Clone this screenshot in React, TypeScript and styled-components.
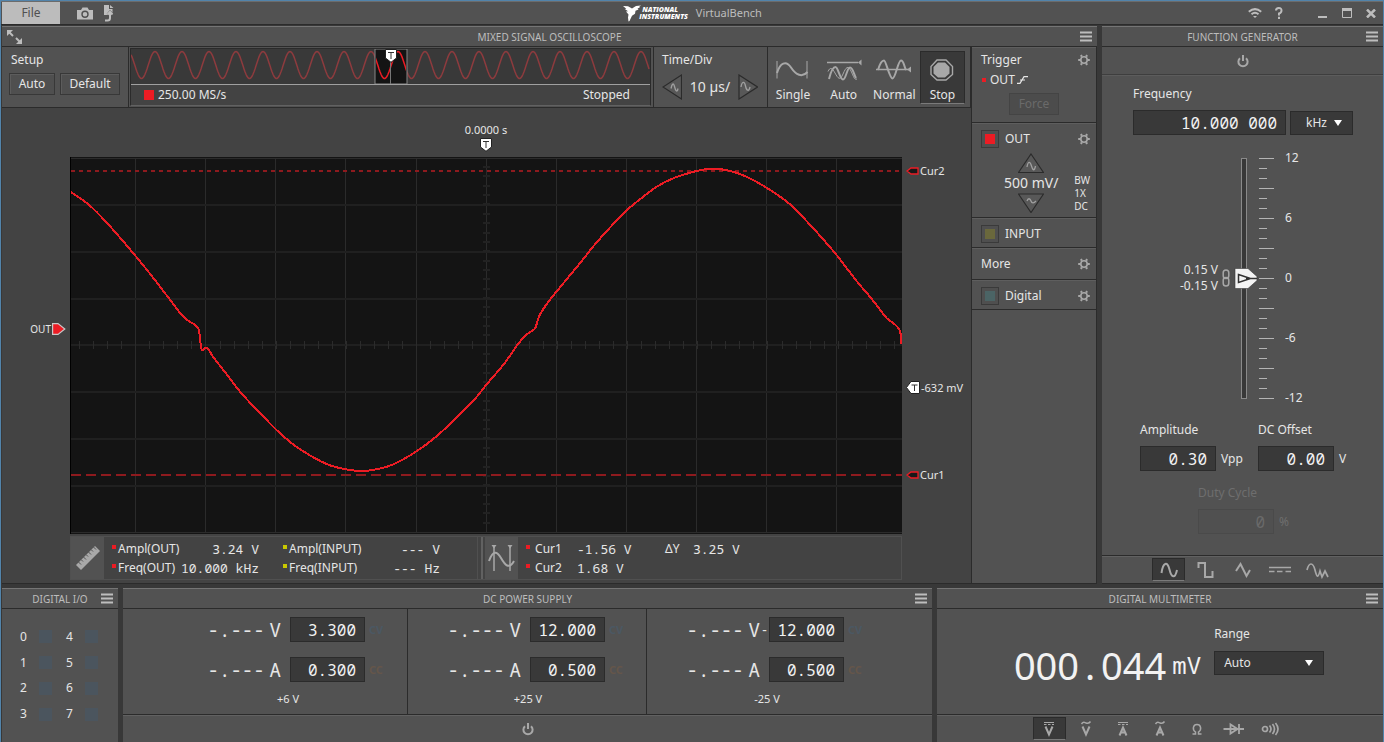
import React from 'react';
import styled, { createGlobalStyle, css } from 'styled-components';

const sans = '"Noto Sans", "Open Sans", sans-serif';
const digits = css`
  font-family: "Noto Sans Mono", "DejaVu Sans Mono", monospace;
  white-space: pre;
`;

const c = {
  frame: '#5284ab',
  gap: '#383838',
  panel: '#525252',
  well: '#434343',
  dark: '#393939',
  line: '#2b2b2b',
  light: '#616161',
  text: '#e6e6e6',
  muted: '#bdbdbd',
  icon: '#a8a8a8',
  red: '#ec1c24',
  yellow: '#c8c800',
};

const GlobalStyle = createGlobalStyle`
  *, *::before, *::after { box-sizing: border-box; }
  body { margin: 0; background: ${c.gap}; }
  button, input, select { font: inherit; color: inherit; margin: 0; padding: 0; border: 0; background: none; border-radius: 0; }
  svg { display: block; flex: none; }
`;

const Window = styled.div`
  display: flex;
  flex-direction: column;
  min-height: 100vh;
  border: 1px solid ${c.frame};
  border-bottom: 0;
  background: ${c.gap};
  color: ${c.text};
  font: 12px/16px ${sans};
`;

const TitleBar = styled.header`
  display: grid;
  grid-template-columns: 1fr auto 1fr;
  align-items: center;
  height: 24px;
  padding-left: 1px;
  background: ${c.panel};
  border-top: 1px solid #6c6c6c;
  border-bottom: 1px solid ${c.line};
`;

const BarGroup = styled.div<{ $end?: boolean }>`
  display: flex;
  align-items: center;
  height: 100%;
  justify-content: ${p => (p.$end ? 'flex-end' : 'flex-start')};
`;

const WindowControls = styled.div`
  display: flex;
  margin-left: 20px;
`;

const FileButton = styled.button`
  width: 58px;
  height: 100%;
  margin-right: 17px;
  background: #bcbcbc;
  color: #505050;
`;

const IconButton = styled.button<{ $w: number }>`
  display: flex;
  align-items: center;
  justify-content: center;
  width: ${p => p.$w}px;
  height: 20px;
  color: ${c.muted};
`;

const Brand = styled.div`
  display: flex;
  align-items: center;
  gap: 8px;
  color: ${c.muted};
  font-size: 11px;
`;

const Logo = styled.div`
  display: flex;
  align-items: center;
  color: #fff;
`;

const LogoWords = styled.div`
  margin-left: -2px;
  font: italic 800 7px/7px "Open Sans", sans-serif;
  span { display: block; }
  span:first-child { padding-left: 3px; }
`;

const TopRow = styled.div`
  flex: 1;
  display: grid;
  grid-template-columns: minmax(0, 1fr) 281px;
  gap: 5px;
  margin-top: 1px;
  padding-left: 1px;
`;

const BottomRow = styled.div`
  display: grid;
  grid-template-columns: 116px minmax(0, 1fr) 446px;
  gap: 5px;
  height: 155px;
  margin-top: 4px;
  padding-left: 1px;
`;

const Panel = styled.section`
  display: flex;
  flex-direction: column;
  background: ${c.panel};
  border-bottom: 1px solid ${c.line};
`;

const PanelHeader = styled.header`
  display: grid;
  grid-template-columns: 1fr auto 1fr;
  align-items: center;
  height: 21px;
  padding: 0 5px;
  border-top: 1px solid #757575;
  border-bottom: 1px solid ${c.line};
  color: ${c.muted};
`;

const PanelTitle = styled.h2`
  grid-column: 2;
  margin: 0;
  font-size: 10px;
  font-weight: 400;
`;

const MenuButton = styled.button`
  grid-column: 3;
  justify-self: end;
  color: ${c.muted};
`;

const PowerButton = styled.button`
  display: flex;
  align-items: center;
  justify-content: center;
  height: 27px;
  color: ${c.icon};
`;

const Footer = styled.div`
  display: flex;
  justify-content: center;
  align-items: center;
  gap: 4px;
  height: 28px;
  border-top: 1px solid ${c.line};
  box-shadow: inset 0 1px ${c.light};
`;

const ModeButton = styled.button<{ $on?: boolean }>`
  display: flex;
  align-items: center;
  justify-content: center;
  width: 33px;
  height: 23px;
  color: ${c.icon};
  background: ${p => (p.$on ? c.dark : 'none')};
  border: 1px solid ${p => (p.$on ? c.line : 'transparent')};
  border-bottom-color: ${p => (p.$on ? '#7a7a7a' : 'transparent')};
`;

/* oscilloscope */

const ScopeBody = styled.div`
  flex: 1;
  display: grid;
  grid-template-columns: minmax(0, 1fr) 126px;
`;

const ScopeMain = styled.div`
  display: flex;
  flex-direction: column;
  background: ${c.well};
`;

const Toolbar = styled.div`
  display: flex;
  height: 61px;
  background: ${c.panel};
  border-bottom: 1px solid ${c.line};
`;

const SetupGroup = styled.div`
  width: 127px;
  padding: 5px 8px 0 7px;
  border-right: 1px solid ${c.line};
`;

const GroupLabel = styled.div`
  padding-left: 2px;
  margin-bottom: 5px;
`;

const TimeLabel = styled.div`
  margin-bottom: 6px;
`;

const ButtonRow = styled.div`
  display: flex;
  gap: 5px;
`;

const PushButton = styled.button<{ $w: number }>`
  width: ${p => p.$w}px;
  height: 22px;
  border: 1px solid #383838;
  box-shadow: inset 1px 1px #5c5c5c;
  background: #4f4f4f;
  &:disabled { color: #6a6a6a; background: #4c4c4c; border-color: #444; box-shadow: none; }
`;

const Overview = styled.div`
  flex: 1;
  margin: 1px 2px 1px 1px;
  display: flex;
  flex-direction: column;
  border: 1px solid ${c.line};
  border-bottom-color: ${c.light};
  background: ${c.well};
`;

const OverviewWave = styled.div`
  position: relative;
  height: 36px;
  background: ${c.dark};
  border-bottom: 1px solid #a0a0a0;
  > svg { width: 100%; height: 100%; }
`;

const OverviewPin = styled.div`
  position: absolute;
  left: 50%;
  top: 0;
  margin-left: -6px;
`;

const OverviewStatus = styled.div`
  display: flex;
  align-items: center;
  gap: 4px;
  padding: 2px 20px 0 13px;
  span:last-child { margin-left: auto; }
`;

const Swatch = styled.i<{ $size: number; $color: string }>`
  flex: none;
  display: inline-block;
  width: ${p => p.$size}px;
  height: ${p => p.$size}px;
  background: ${p => p.$color};
`;

const TimeGroup = styled.div`
  width: 114px;
  padding: 5px 9px 0 8px;
  border-left: 1px solid ${c.line};
`;

const Stepper = styled.div`
  display: flex;
  align-items: center;
  justify-content: space-between;
  font-size: 14px;
`;

const RunGroup = styled.div`
  display: flex;
  justify-content: space-between;
  width: 204px;
  padding: 4px 5px 3px 0;
  border-left: 1px solid ${c.line};
  border-right: 1px solid ${c.line};
`;

const RunButton = styled.button<{ $on?: boolean }>`
  width: ${p => (p.$on ? 45 : 50)}px;
  display: flex;
  flex-direction: column;
  align-items: center;
  justify-content: space-between;
  padding: 7px 0 0;
  background: ${p => (p.$on ? c.dark : 'none')};
  border: 1px solid ${p => (p.$on ? c.line : 'transparent')};
  border-bottom-color: ${p => (p.$on ? '#7a7a7a' : 'transparent')};
`;

const PlotArea = styled.div`
  flex: 1;
  display: grid;
  grid-template-columns: 68px minmax(0, 1fr) 69px;
  grid-template-rows: 49px minmax(377px, 1fr) 49px;
`;

const TimeMarker = styled.div`
  grid-column: 2;
  grid-row: 1;
  display: flex;
  flex-direction: column;
  align-items: center;
  justify-content: flex-end;
  padding-bottom: 5px;
  font-size: 11px;
`;

const Plot = styled.div`
  grid-column: 2;
  grid-row: 2;
  background: #141414;
  border-left: 1px solid #000;
  > svg { width: 100%; height: 100%; }
`;

const Gutter = styled.div<{ $col: number }>`
  grid-column: ${p => p.$col};
  grid-row: 2;
  position: relative;
  font-size: ${p => (p.$col === 1 ? 10 : 11)}px;
`;

const Pin = styled.div<{ $right?: boolean }>`
  position: absolute;
  display: flex;
  align-items: center;
  gap: 1px;
  height: 16px;
  margin-top: -8px;
  white-space: nowrap;
  ${p => (p.$right ? 'left: 4px;' : 'right: 4px;')}
`;

const MeasureBar = styled.div`
  grid-column: 2;
  grid-row: 3;
  align-self: start;
  display: flex;
  height: 44px;
  margin-top: 2px;
  border: 1px solid #505050;
`;

const MeasureButton = styled.button`
  display: flex;
  align-items: center;
  justify-content: center;
  width: 33px;
  background: ${c.panel};
  color: ${c.icon};
`;

const MeasureSplit = styled.div`
  width: 6px;
  border-left: 1px solid #505050;
  border-right: 2px solid ${c.light};
  margin: 0 2px 0 37px;
`;

const MeasureTable = styled.table<{ $w: number }>`
  flex: none;
  width: ${p => p.$w}px;
  table-layout: fixed;
  border-collapse: collapse;
  margin: 2px 0 2px 8px;
  th, td { padding: 0; height: 19px; font-size: 12px; font-weight: 400; text-align: left; white-space: pre; }
  th i { margin-right: 2px; vertical-align: 4px; }
`;

const Num = styled.td<{ $left?: boolean; $pad?: number }>`
  && {
    ${digits}
    font-size: 13px;
    text-align: ${p => (p.$left ? 'left' : 'right')};
    padding-right: ${p => p.$pad ?? 0}px;
  }
`;

/* channel column */

const Side = styled.aside`
  border-left: 1px solid ${c.line};
  border-right: 1px solid ${c.line};
`;

const SideSection = styled.div<{ $h: number }>`
  height: ${p => p.$h}px;
  padding: 1px 6px 0 9px;
  border-bottom: 1px solid ${c.line};
  box-shadow: inset 0 1px #5e5e5e;
`;

const SideRow = styled.div<{ $h: number }>`
  display: flex;
  align-items: center;
  gap: 5px;
  height: ${p => p.$h}px;
  > button:last-child { margin-left: auto; color: ${c.icon}; }
`;

const TriggerSource = styled.div`
  display: flex;
  align-items: center;
  gap: 2px;
  height: 16px;
  margin-bottom: 5px;
  padding-left: 1px;
  i { margin-right: 2px; }
`;

const ForceRow = styled.div`
  display: flex;
  padding-left: 28px;
`;

const CheckLabel = styled.label`
  display: flex;
  align-items: center;
  gap: 6px;
`;

const ColorCheck = styled.input<{ $color: string }>`
  appearance: none;
  width: 18px;
  height: 18px;
  border: 1px solid #3a3a3a;
  background: linear-gradient(${p => p.$color}, ${p => p.$color}) center / 10px 10px no-repeat #4f4f4f;
`;

const ScaleRow = styled.div`
  display: flex;
  justify-content: space-between;
  padding-left: 23px;
`;

const ScaleStepper = styled.div`
  display: flex;
  flex-direction: column;
  align-items: center;
  font-size: 14px;
  line-height: 20px;
`;

const Coupling = styled.div`
  padding-top: 21px;
  font-size: 10px;
  line-height: 13px;
  span { display: block; }
`;

/* function generator */

const PowerStrip = styled.div`
  display: flex;
  justify-content: center;
  border-bottom: 1px solid #3e3e3e;
  box-shadow: 0 1px #5c5c5c;
`;

const GenBody = styled.div`
  flex: 1;
  width: 281px;
  margin: 0 auto;
  padding: 11px 30px 0 31px;
`;

const Field = styled.label`
  display: block;
`;

const FieldCaption = styled.span`
  display: block;
  margin-bottom: 8px;
`;

const FieldRow = styled.div`
  display: flex;
  align-items: flex-end;
  gap: 4px;
`;

const NumberBox = styled.input<{ $w: number }>`
  && {
    ${digits}
    width: ${p => p.$w}px;
    height: 25px;
    padding: 1px 8px 0 0;
    font-size: 16px;
    text-align: right;
    background: ${c.dark};
    border: 1px solid ${c.line};
    color: #f2f2f2;
  }
  &&:disabled { color: #6a6a6a; background: #505050; border-color: #4a4a4a; }
`;

const SelectWrap = styled.span<{ $w: number; $pad: number }>`
  position: relative;
  display: block;
  width: ${p => p.$w}px;
  select {
    appearance: none;
    width: 100%;
    height: 24px;
    padding-left: ${p => p.$pad}px;
    background: ${c.dark};
    border: 1px solid ${c.line};
  }
  svg { position: absolute; right: 11px; top: 9px; pointer-events: none; }
`;

const SliderRow = styled.div`
  display: flex;
  margin: 15px 0 16px 43px;
`;

const SliderValues = styled.div`
  width: 42px;
  padding-top: 112px;
  text-align: right;
`;

const LinkMark = styled.div`
  padding: 119px 3px 0 4px;
  color: ${c.icon};
`;

const SliderTrack = styled.div`
  position: relative;
  width: 52px;
  input {
    position: absolute;
    inset: 0;
    width: 24px;
    height: 100%;
    opacity: 0;
    writing-mode: vertical-lr;
    direction: rtl;
  }
`;

const SliderScale = styled.div`
  display: flex;
  flex-direction: column;
  justify-content: space-between;
  height: 256px;
`;

const LevelRow = styled.div`
  display: grid;
  grid-template-columns: 118px auto;
  justify-content: start;
  padding-left: 7px;
  margin-bottom: 14px;
`;

const WithUnit = styled.span`
  display: flex;
  align-items: center;
  gap: 5px;
`;

const DutyField = styled(Field)`
  padding-left: 65px;
  color: #6e6e6e;
`;

/* digital i/o */

const IoGrid = styled.div`
  flex: 1;
  display: grid;
  grid-template-columns: 46px 46px;
  grid-template-rows: repeat(4, 1fr);
  grid-auto-flow: column;
  padding: 15px 0 15px 17px;
`;

const IoLine = styled.label`
  display: flex;
  align-items: center;
  gap: 12px;
  padding-left: 1px;
`;

const IoCheck = styled.input`
  appearance: none;
  width: 13px;
  height: 13px;
  background: #4b555e;
`;

/* power supply */

const SupplyBody = styled.div`
  flex: 1;
  display: grid;
  grid-template-columns: minmax(239px, 1fr) 239px minmax(239px, 1fr);
`;

const Channel = styled.div<{ $align: string }>`
  display: flex;
  justify-content: ${p => p.$align};
  border-right: 1px solid ${c.line};
  &:last-child { border-right: 0; }
`;

const ChannelInner = styled.div`
  width: 239px;
  padding: 8px 0 0 29px;
`;

const SupplyRow = styled.label`
  display: flex;
  align-items: center;
  height: 25px;
  margin-bottom: 15px;
`;

const SupplyReading = styled.span`
  ${digits}
  display: flex;
  justify-content: flex-end;
  gap: 5px;
  width: 84px;
  font-size: 19px;
`;

const Sign = styled.span`
  width: 9px;
  text-align: center;
  font-size: 14px;
`;

const LimitTag = styled.span<{ $color: string }>`
  margin-left: 4px;
  font-size: 11px;
  font-weight: 700;
  color: ${p => p.$color};
`;

const ChannelName = styled.div`
  width: 182px;
  font-size: 11px;
  text-align: center;
  margin-top: -6px;
`;

/* multimeter */

const MeterBody = styled.div`
  flex: 1;
  display: flex;
  justify-content: center;
  gap: 13px;
  padding: 17px 0 0 18px;
`;

const MeterReading = styled.div`
  display: flex;
  align-items: center;
  gap: 6px;
  height: 78px;
  color: #f2f2f2;
  font-size: 38px;
`;

const DecimalPoint = styled.span`
  display: inline-block;
  width: 22px;
  text-align: center;
`;

const MeterUnit = styled.small`
  ${digits}
  font-size: 24px;
`;

const RangeCaption = styled.span`
  display: block;
  margin-bottom: 9px;
`;

/* drawings */

const stroke = { fill: 'none', stroke: 'currentColor', strokeWidth: 2 };

const MenuIcon = () => (
  <svg width="12" height="11" viewBox="0 0 12 11"><path {...stroke} d="M0 1.500h12M0 5.500h12M0 9.500h12" /></svg>
);
const GearIcon = () => (
  <svg width="12" height="12" viewBox="0 0 12 12">
    <circle cx="6" cy="6" r="3.200" fill="none" stroke="currentColor" strokeWidth="1.600" />
    <path stroke="currentColor" strokeWidth="2" d="M3.800 2.700L3 1M8.200 2.700L9 1M3.800 9.300L3 11M8.200 9.300L9 11M2.500 6H.2M9.500 6h2.300" />
  </svg>
);
const PowerIcon = () => (
  <svg width="12" height="14" viewBox="0 0 12 14">
    <path {...stroke} d="M3 4.200A4.600 4.600 0 1 0 9 4.200M6 1v6" />
  </svg>
);
const TPin = () => (
  <svg width="12" height="14" viewBox="0 0 12 14">
    <path d="M.5.5h11v8.500L6 13.300.5 9z" fill="#fff" stroke="#222" />
    <path d="M3 3.500h6M6 3.500v6.500" stroke="#333" fill="none" />
  </svg>
);
const TPinLeft = () => (
  <svg width="14" height="13" viewBox="0 0 14 13">
    <path d="M13.500.5v12H5L.5 6.500 5 .5z" fill="#fff" stroke="#222" />
    <path d="M5.500 4h6M8.500 4v6" stroke="#333" fill="none" />
  </svg>
);
const CursorPin = () => (
  <svg width="13" height="8" viewBox="0 0 13 8"><path d="M12 1v6H5L1 4l4-3z" fill="#181818" stroke={c.red} strokeWidth="1.300" /></svg>
);
const OutPin = () => (
  <svg width="14" height="12" viewBox="0 0 14 12"><path d="M.6.6H6L12.800 6 6 11.400H.6z" fill={c.red} stroke="#c8c8c8" strokeWidth="1.200" /></svg>
);

const StepIcon = ({ dir }: { dir: 'left' | 'right' | 'up' | 'down' }) => {
  const side = dir === 'left' || dir === 'right';
  const tri = {
    left: 'M19.500 1v24L1 13z',
    right: 'M1 1v24l18.500-12z',
    up: 'M13 1l12.500 18.500H.5z',
    down: 'M.5 1h25L13 19.500z',
  }[dir];
  const wave = {
    left: 'M9 14.500c1-5 2.500-6 3.500-2s2.500 7 3.500 2',
    right: 'M3 13c1-6 3.500-6 4.500-1s3.500 6 4.500 1',
    up: 'M9 14c1-6 3-6 4.500-1s3 5 4 0',
    down: 'M9 8c1-3 3-3 4 0s3 2 5 0',
  }[dir];
  return (
    <svg width={side ? 20 : 26} height={side ? 26 : 20} viewBox={side ? '0 0 20 26' : '0 0 26 20'}>
      <path d={tri} fill="#585858" stroke="#2b2b2b" strokeWidth="1.200" />
      <path d={wave} fill="none" stroke="#a0a0a0" strokeWidth="1.300" />
    </svg>
  );
};

const runIcons = {
  Single: (
    <g fill="none" stroke="currentColor">
      <path d="M2 2v17.500M32 2v17.500" />
      <path strokeWidth="2" d="M2 14C5 4 11 1 16 8.500S27 19 32.500 13" />
    </g>
  ),
  Auto: (
    <g fill="none" stroke="currentColor">
      <path d="M1 3.500h31" strokeWidth="1.500" />
      <path d="M32 3.500l3.500-3v6z" fill="currentColor" stroke="none" />
      <path strokeWidth="2" d="M3 20C5 12 7 8 9.500 8S14 20.500 17 20.500 21 8.500 24 8.500 28 16 30 19" />
      <path d="M2 12.500C4 8 6 8.500 9 14s5 8 8 1 5-9 8-3 3 9 6 8" />
    </g>
  ),
  Normal: (
    <g fill="none" stroke="currentColor">
      <path d="M0 10.500h32" strokeWidth="1.500" />
      <path d="M31 10.500l4-3v6z" fill="currentColor" stroke="none" />
      <path strokeWidth="2" d="M2 11C4 4 6 1.500 8 1.500S13.500 19.500 16.500 19.500 22 1.500 25 1.500 28 8 30 11" />
    </g>
  ),
  Stop: (
    <g>
      <path d="M13 1h9l6.500 6.500v8L22 21h-9l-6-5.500v-8z" fill="none" stroke="#a8a8a8" strokeWidth="1.400" />
      <path d="M14 3.500h7l4.500 4.500v6.500L21 18.500h-7L9.500 14.500V8z" fill="#a8a8a8" />
    </g>
  ),
};

const genIcons = [
  ['Sine', <path {...stroke} d="M4.500 12C6 1 10.500 0 12.500 8.500S18 18 20 9" />],
  ['Square', <path {...stroke} d="M4.500 7V2h6.500v14h7.500v-6" />],
  ['Triangle', <path {...stroke} d="M5 10l4.500-7 6 12L19 9" />],
  ['DC', <path {...stroke} strokeWidth={1.500} d="M1 6.500h22M1 10.500h5.500M9 10.500h5.500M17.500 10.500H23" />],
  ['Arbitrary', <path {...stroke} strokeWidth={1.700} d="M2 9C4 1 8 1 10 9s3 8 5 1l2 6 3-6 3 6" />],
] as const;

const dcBars = <path strokeWidth="1" d="M7 2.500h10M7 4.500h2.500M11 4.500h2.500M15 4.500h2" />;
const acWave = <path strokeWidth="1.500" d="M7.500 4c2-3 3-1.500 4.500-1S15 4 16.500 1.500" />;
const letterV = <path d="M8.500 6.500l3.500 8 3.500-8" />;
const letterA = <path d="M8.500 15.500l3.500-8 3.500 8M10 12.500h4" />;

const meterIcons = [
  ['DC volts', <g {...stroke}>{dcBars}{letterV}</g>],
  ['AC volts', <g {...stroke}>{acWave}{letterV}</g>],
  ['DC amps', <g {...stroke}>{dcBars}{letterA}</g>],
  ['AC amps', <g {...stroke}>{acWave}{letterA}</g>],
  ['Ohms', <path {...stroke} strokeWidth={1.500} d="M7.500 14h3v-2C7 9.500 8 4.500 12 4.500s5 5 1.500 7.500v2h3" />],
  ['Diode', <path {...stroke} strokeWidth={1.800} d="M1.500 9H22M8.500 4.500v9l7-4.500zM17 4v10" />],
  ['Continuity', <g {...stroke} strokeWidth={1.700}><circle cx="6" cy="9" r="2.500" /><path d="M10.500 5.500q3 3.500 0 7M13.500 4q4 5 0 10M16.500 3q5 6 0 12" /></g>],
] as const;

/* waveform data, in plot units */

const trace: number[][] = [
  [0, 35], [17, 47], [30, 59.5], [45, 76], [65, 99.500], [80, 118], [100, 144], [110, 157], [117, 163.500],
  [124, 168], [128, 173], [129, 183], [131, 193], [134, 191], [137, 192], [143, 201], [157, 219], [171, 237],
  [190, 257], [205, 272.500], [223, 288], [240, 299], [258, 308], [276, 312.500], [291, 314], [307, 312],
  [323, 307], [346, 294], [366, 279], [386, 260], [403, 243], [416, 227], [433, 207], [446, 188.500],
  [455, 178], [464, 171.500], [467, 162], [471, 154], [480, 141.500], [493, 125.500], [510, 105], [523, 88.500],
  [540, 69.500], [556, 53], [570, 41.500], [586, 29.500], [603, 21], [620, 15.500], [633, 12.500], [648, 12],
  [663, 15], [676, 20], [696, 31], [718, 46.500], [736, 64.500], [751, 81], [766, 98.500], [786, 124.500],
  [800, 141], [810, 154], [816, 161.500], [824, 167.500], [828, 172], [830, 179], [830, 187],
];

const smooth = (pts: number[][]) =>
  pts.slice(1).reduce((d, p, i) => {
    const a = pts[Math.max(i - 1, 0)];
    const b = pts[i];
    const n = pts[Math.min(i + 2, pts.length - 1)];
    const k = 7;
    return `${d}C${b[0] + (p[0] - a[0]) / k} ${b[1] + (p[1] - a[1]) / k} ${p[0] - (n[0] - b[0]) / k} ${p[1] - (n[1] - b[1]) / k} ${p[0]} ${p[1]}`;
  }, `M${pts[0][0]} ${pts[0][1]}`);

const overviewPath = 'M' + Array.from({ length: 519 }, (_, x) =>
  `${x} ${(16 - 13.5 * Math.cos((2 * Math.PI * (x - 24)) / 27)).toFixed(1)}`).join('L');

const columns = [65, 135, 205, 275, 346, 416, 486, 556, 626, 696, 766];
const rows = [48, 95, 142, 188, 235, 282, 329];

const PlotDrawing = () => (
  <svg viewBox="0 0 831 377" preserveAspectRatio="none" role="img" aria-label="Channel OUT waveform">
    <g shapeRendering="crispEdges" fill="none">
      <path stroke="#2b2b2b" d={columns.map(x => `M${x - 0.5} 1V375`).join('') + 'M0 1.500H831M0 375.500H831'} />
      <path stroke="#202020" strokeWidth="2" d={rows.map(y => `M0 ${y}H831`).join('')} />
      <path stroke="#2b2b2b" d={Array.from({ length: 59 }, (_, i) => `M${Math.round(9 + i * 14.05) - 0.5} 184v8`).join('')} />
      <path stroke="#222" strokeWidth="2" d={Array.from({ length: 39 }, (_, i) => `M412 ${Math.round(10 + i * 9.36)}h7`).join('')} />
      <path stroke="#8e1a1e" strokeWidth="2" strokeDasharray="4 4" d="M0 14H831" />
      <path stroke="#8e1a1e" strokeWidth="2" strokeDasharray="10 5" d="M0 318H831" />
      <path stroke={c.red} strokeWidth="2" d={smooth(trace)} />
    </g>
  </svg>
);

const Header = ({ title, resize }: { title: string; resize?: boolean }) => (
  <PanelHeader>
    {resize && (
      <svg width="16" height="16" viewBox="0 0 16 16" fill={c.muted} stroke={c.muted} strokeWidth="2">
        <path stroke="none" d="M0 1h6L0 7z" /><path d="M1 2l5 5" />
        <path stroke="none" d="M15 15H9l6-6z" /><path d="M14 14l-5-5" />
      </svg>
    )}
    <PanelTitle>{title}</PanelTitle>
    <MenuButton aria-label={`${title} menu`}><MenuIcon /></MenuButton>
  </PanelHeader>
);

const Arrow = () => <svg width="8" height="6" viewBox="0 0 8 6"><path fill="#fff" d="M0 0h8L4 6z" /></svg>;

const Gear = ({ label }: { label: string }) => <button aria-label={label}><GearIcon /></button>;

const supplies = [
  { name: '+6 V', volts: '3.300', amps: '0.300', align: 'flex-end', sign: '' },
  { name: '+25 V', volts: '12.000', amps: '0.500', align: 'center', sign: '' },
  { name: '-25 V', volts: '12.000', amps: '0.500', align: 'flex-start', sign: '-' },
];

const Scope = () => (
  <Panel>
    <Header title="MIXED SIGNAL OSCILLOSCOPE" resize />
    <ScopeBody>
      <ScopeMain>
        <Toolbar>
          <SetupGroup>
            <GroupLabel>Setup</GroupLabel>
            <ButtonRow>
              <PushButton $w={46}>Auto</PushButton>
              <PushButton $w={60}>Default</PushButton>
            </ButtonRow>
          </SetupGroup>
          <Overview>
            <OverviewWave>
              <svg viewBox="0 0 519 35" preserveAspectRatio="none">
                <path d={overviewPath} fill="none" stroke="#8d3b3e" strokeWidth="1.500" />
                <path d="M244 0h32v35h-32z" fill="#141414" stroke="#888" />
                <svg x="245" width="30" height="35" viewBox="245 0 30 35">
                  <path d={overviewPath} fill="none" stroke={c.red} strokeWidth="1.500" />
                  <path d="M259.500 0v35" stroke="#777" />
                </svg>
              </svg>
              <OverviewPin><TPin /></OverviewPin>
            </OverviewWave>
            <OverviewStatus>
              <Swatch $size={10} $color={c.red} />
              <span>250.00 MS/s</span>
              <span>Stopped</span>
            </OverviewStatus>
          </Overview>
          <TimeGroup>
            <TimeLabel>Time/Div</TimeLabel>
            <Stepper>
              <button aria-label="Decrease time per division"><StepIcon dir="left" /></button>
              10 µs/
              <button aria-label="Increase time per division"><StepIcon dir="right" /></button>
            </Stepper>
          </TimeGroup>
          <RunGroup>
            {(Object.keys(runIcons) as (keyof typeof runIcons)[]).map(k => (
              <RunButton key={k} $on={k === 'Stop'}>
                <svg width="36" height="22" viewBox="0 0 36 22" color={c.icon}>{runIcons[k]}</svg>
                {k}
              </RunButton>
            ))}
          </RunGroup>
        </Toolbar>
        <PlotArea>
          <TimeMarker>0.0000 s<TPin /></TimeMarker>
          <Gutter $col={1}>
            <Pin style={{ top: '45.600%' }}>OUT<OutPin /></Pin>
          </Gutter>
          <Plot><PlotDrawing /></Plot>
          <Gutter $col={3}>
            <Pin $right style={{ top: '3.700%' }}><CursorPin />Cur2</Pin>
            <Pin $right style={{ top: '61.200%' }}><TPinLeft />-632 mV</Pin>
            <Pin $right style={{ top: '84.400%' }}><CursorPin />Cur1</Pin>
          </Gutter>
          <MeasureBar>
            <MeasureButton aria-label="Measurements">
              <svg width="26" height="26" viewBox="0 0 26 26">
                <path fill="currentColor" d="M1 20L20 1l5 5L6 25z" />
                <path stroke={c.panel} fill="none" d="M3.500 17l2.500 2.500M6 14.500l2 2M8.500 12l2.500 2.500M11 9.500l2 2M13.500 7l2.500 2.500M16 4.500l2 2M18.500 2l2.500 2.500" />
              </svg>
            </MeasureButton>
            <MeasureTable $w={328}>
              <colgroup><col width={64} /><col width={107} /><col width={79} /><col /></colgroup>
              <tbody>
                <tr>
                  <th scope="row"><Swatch $size={4} $color={c.red} />Ampl(OUT)</th><Num $pad={24}>3.24 V</Num>
                  <th scope="row"><Swatch $size={4} $color={c.yellow} />Ampl(INPUT)</th><Num>--- V</Num>
                </tr>
                <tr>
                  <th scope="row"><Swatch $size={4} $color={c.red} />Freq(OUT)</th><Num $pad={24}>10.000 kHz</Num>
                  <th scope="row"><Swatch $size={4} $color={c.yellow} />Freq(INPUT)</th><Num>--- Hz</Num>
                </tr>
              </tbody>
            </MeasureTable>
            <MeasureSplit />
            <MeasureButton aria-label="Cursors">
              <svg width="28" height="28" viewBox="0 0 28 28">
                <path {...stroke} strokeWidth={1.500} d="M6 3v24M22 3v24" />
                <path fill="currentColor" d="M3.500 1h5L6 4.500zM19.500 1h5L22 4.500z" />
                <path {...stroke} d="M1 17C5 6 9 7 13 14s8 12 13 3" />
              </svg>
            </MeasureButton>
            <MeasureTable $w={240}>
              <colgroup><col width={51} /><col width={88} /><col width={28} /><col /></colgroup>
              <tbody>
                <tr>
                  <th scope="row"><Swatch $size={4} $color={c.red} /> Cur1</th><Num $left>-1.56 V</Num>
                  <th scope="row">ΔY</th><Num $left>3.25 V</Num>
                </tr>
                <tr>
                  <th scope="row"><Swatch $size={4} $color={c.red} /> Cur2</th><Num $left>1.68 V</Num>
                  <td /><td />
                </tr>
              </tbody>
            </MeasureTable>
          </MeasureBar>
        </PlotArea>
      </ScopeMain>
      <Side>
        <SideSection $h={76}>
          <SideRow $h={24}>Trigger<Gear label="Trigger settings" /></SideRow>
          <TriggerSource>
            <Swatch $size={4} $color={c.red} />
            <span>OUT</span>
            <svg width="11" height="8" viewBox="0 0 11 8"><path fill="none" stroke={c.text} strokeWidth="1.200" d="M0 7.300h3L7 .7h4M3 4h5" /></svg>
          </TriggerSource>
          <ForceRow><PushButton $w={50} disabled>Force</PushButton></ForceRow>
        </SideSection>
        <SideSection $h={95}>
          <SideRow $h={29}>
            <CheckLabel><ColorCheck type="checkbox" defaultChecked $color={c.red} />OUT</CheckLabel>
            <Gear label="OUT settings" />
          </SideRow>
          <ScaleRow>
            <ScaleStepper>
              <button aria-label="Increase scale"><StepIcon dir="up" /></button>
              500 mV/
              <button aria-label="Decrease scale"><StepIcon dir="down" /></button>
            </ScaleStepper>
            <Coupling><span>BW</span><span>1X</span><span>DC</span></Coupling>
          </ScaleRow>
        </SideSection>
        <SideSection $h={30}>
          <SideRow $h={29}><CheckLabel><ColorCheck type="checkbox" $color="#6a683c" />INPUT</CheckLabel></SideRow>
        </SideSection>
        <SideSection $h={32}>
          <SideRow $h={29}>More<Gear label="More settings" /></SideRow>
        </SideSection>
        <SideSection $h={30}>
          <SideRow $h={29}>
            <CheckLabel><ColorCheck type="checkbox" $color="#4b6465" />Digital</CheckLabel>
            <Gear label="Digital settings" />
          </SideRow>
        </SideSection>
      </Side>
    </ScopeBody>
  </Panel>
);

const Generator = () => (
  <Panel>
    <Header title="FUNCTION GENERATOR" />
    <PowerStrip><PowerButton aria-label="Function generator power"><PowerIcon /></PowerButton></PowerStrip>
    <GenBody>
      <FieldRow>
        <Field><FieldCaption>Frequency</FieldCaption><NumberBox $w={153} defaultValue="10.000 000" /></Field>
        <SelectWrap $w={64} $pad={15}>
          <select aria-label="Frequency unit" defaultValue="kHz"><option>kHz</option></select>
          <Arrow />
        </SelectWrap>
      </FieldRow>
      <SliderRow>
        <SliderValues>0.15 V<br />-0.15 V</SliderValues>
        <LinkMark>
          <svg width="8" height="18" viewBox="0 0 8 18" fill="none" stroke="currentColor" strokeWidth="1.500">
            <rect x="1.200" y="1" width="5.600" height="8.500" rx="2.800" /><rect x="1.200" y="8.500" width="5.600" height="8.500" rx="2.800" />
          </svg>
        </LinkMark>
        <SliderTrack>
          <svg width="48" height="256" viewBox="0 0 48 256">
            <rect x="8.500" y="8.500" width="5" height="240" fill="#383838" stroke="#8a8a8a" />
            <path stroke="#b4b4b4" d={Array.from({ length: 25 }, (_, i) => `M26 ${8.5 + i * 10}h${i % 3 ? 8 : 15}`).join('')} />
            <path d="M2 118.500h13l9 8v4l-9 8H2z" fill="#f4f4f4" stroke="#3a3a3a" strokeWidth=".6" />
            <path d="M24 128.500H13M5.500 124.500l12 4-12 4z" fill="#f4f4f4" stroke="#333" strokeWidth="1.500" />
          </svg>
          <input type="range" min="-12" max="12" step="0.01" defaultValue="0" aria-label="Output level" />
        </SliderTrack>
        <SliderScale><span>12</span><span>6</span><span>0</span><span>-6</span><span>-12</span></SliderScale>
      </SliderRow>
      <LevelRow>
        <Field><FieldCaption>Amplitude</FieldCaption><WithUnit><NumberBox $w={76} defaultValue="0.30" />Vpp</WithUnit></Field>
        <Field><FieldCaption>DC Offset</FieldCaption><WithUnit><NumberBox $w={76} defaultValue="0.00" />V</WithUnit></Field>
      </LevelRow>
      <DutyField><FieldCaption>Duty Cycle</FieldCaption><WithUnit><NumberBox $w={76} defaultValue="0" disabled />%</WithUnit></DutyField>
    </GenBody>
    <Footer>
      {genIcons.map(([name, d], i) => (
        <ModeButton key={name} $on={i === 0} aria-label={name}><svg width="24" height="18" viewBox="0 0 24 18">{d}</svg></ModeButton>
      ))}
    </Footer>
  </Panel>
);

const DigitalIo = () => (
  <Panel>
    <Header title="DIGITAL I/O" />
    <IoGrid>
      {Array.from({ length: 8 }, (_, i) => (
        <IoLine key={i}>{i}<IoCheck type="checkbox" /></IoLine>
      ))}
    </IoGrid>
  </Panel>
);

const Supply = () => (
  <Panel>
    <Header title="DC POWER SUPPLY" />
    <SupplyBody>
      {supplies.map(s => (
        <Channel key={s.name} $align={s.align}>
          <ChannelInner>
            <SupplyRow>
              <SupplyReading><span>-.---</span><span>V</span></SupplyReading><Sign>{s.sign}</Sign>
              <NumberBox $w={75} defaultValue={s.volts} /><LimitTag $color="#4b5863">CV</LimitTag>
            </SupplyRow>
            <SupplyRow>
              <SupplyReading><span>-.---</span><span>A</span></SupplyReading><Sign />
              <NumberBox $w={75} defaultValue={s.amps} /><LimitTag $color="#65564a">CC</LimitTag>
            </SupplyRow>
            <ChannelName>{s.name}</ChannelName>
          </ChannelInner>
        </Channel>
      ))}
    </SupplyBody>
    <Footer><PowerButton aria-label="Power supply power"><PowerIcon /></PowerButton></Footer>
  </Panel>
);

const Meter = () => (
  <Panel>
    <Header title="DIGITAL MULTIMETER" />
    <MeterBody>
      <MeterReading><span>000<DecimalPoint>.</DecimalPoint>044</span><MeterUnit>mV</MeterUnit></MeterReading>
      <label>
        <RangeCaption>Range</RangeCaption>
        <SelectWrap $w={110} $pad={9}>
          <select defaultValue="Auto"><option>Auto</option></select>
          <Arrow />
        </SelectWrap>
      </label>
    </MeterBody>
    <Footer>
      {meterIcons.map(([name, d], i) => (
        <ModeButton key={name} $on={i === 0} aria-label={name}><svg width="24" height="18" viewBox="0 0 24 18">{d}</svg></ModeButton>
      ))}
    </Footer>
  </Panel>
);

export default function App() {
  return (
    <Window>
      <GlobalStyle />
      <TitleBar>
        <BarGroup>
          <FileButton>File</FileButton>
          <IconButton $w={16} aria-label="Screenshot">
            <svg width="16" height="13" viewBox="0 0 16 13">
              <path fill="currentColor" d="M0 3h4l1.500-2.500h5L12 3h4v9.500H0z" />
              <circle cx="8" cy="7.300" r="3" fill="currentColor" stroke="#505050" strokeWidth="1.400" />
            </svg>
          </IconButton>
          <IconButton $w={32} aria-label="Export data">
            <svg width="10" height="17" viewBox="0 0 10 17">
              <path fill="currentColor" d="M0 0h5v4h3.500v5H5l-2.500 1H0zM6 0l3.500 3H6z" />
              <path stroke="#505050" strokeWidth="1" fill="none" d="M3 9l3-3.500L9.500 9" />
              <path {...stroke} d="M1 15.500h2.500q2.500 0 2.500-2.500V8M3.500 9.500L6 7l2.500 2.500" />
            </svg>
          </IconButton>
        </BarGroup>
        <Brand>
          <Logo>
            <svg width="18" height="17" viewBox="0 0 18 17">
              <path fill="#fff" d="M0 1l5 .2 4 2.300L13 1l5-.5-2 1.500 1 .6-2.500 1 1 1-3 1.200-.5 3-3 2L6.500 16l-1 .5L5 12.500l.5-3L3 6.500l2-.2L1.800 4l1.500-.3z" />
            </svg>
            <LogoWords><span>NATIONAL</span><span>INSTRUMENTS</span></LogoWords>
          </Logo>
          VirtualBench
        </Brand>
        <BarGroup $end>
          <IconButton $w={24} aria-label="Network">
            <svg width="14" height="10" viewBox="0 0 14 10">
              <path {...stroke} d="M.8 3.800Q7-1.500 13.200 3.800M3.500 6.300q3.500-3 7 0" /><path fill="currentColor" d="M5 8h4L7 10z" />
            </svg>
          </IconButton>
          <IconButton $w={24} aria-label="Help">
            <svg width="8" height="12" viewBox="0 0 8 12"><path {...stroke} d="M1 3.500Q1 1 3.800 1T6.500 3.500 4 6.500V8.500M4 9.800V12" /></svg>
          </IconButton>
          <WindowControls>
            <IconButton $w={24} aria-label="Minimize">
              <svg width="10" height="10" viewBox="0 0 10 10"><path {...stroke} d="M0 9h9" /></svg>
            </IconButton>
            <IconButton $w={24} aria-label="Maximize">
              <svg width="10" height="10" viewBox="0 0 10 10"><path fill="none" stroke="currentColor" d="M.5.5h9v9h-9z" /><path {...stroke} strokeWidth={3} d="M0 1.500h10" /></svg>
            </IconButton>
            <IconButton $w={24} aria-label="Close">
              <svg width="10" height="9" viewBox="0 0 10 9"><path {...stroke} strokeWidth={2.500} d="M1 .5l8 8M9 .5l-8 8" /></svg>
            </IconButton>
          </WindowControls>
        </BarGroup>
      </TitleBar>
      <TopRow><Scope /><Generator /></TopRow>
      <BottomRow><DigitalIo /><Supply /><Meter /></BottomRow>
    </Window>
  );
}
